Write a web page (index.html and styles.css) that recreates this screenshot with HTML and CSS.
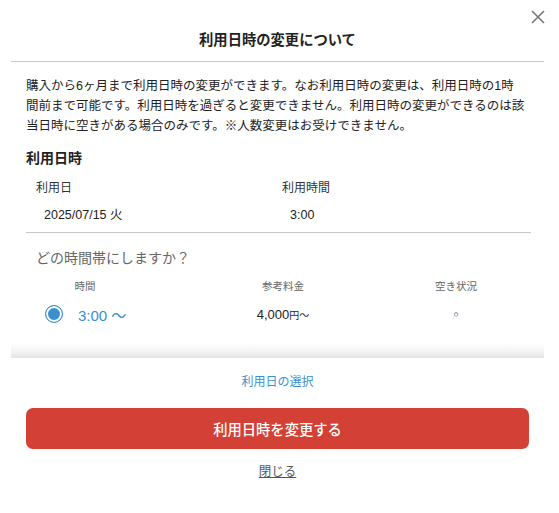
FILE: index.html
```html
<!DOCTYPE html>
<html lang="ja">
<head>
<meta charset="utf-8">
<title>利用日時の変更について</title>
<link rel="stylesheet" href="styles.css">
</head>
<body>
<div class="modal">
  <button class="close" aria-label="閉じる">
    <svg width="14" height="14" viewBox="0 0 14 14"><path d="M1 1L13 13M13 1L1 13" stroke="#777" stroke-width="1.6" fill="none"/></svg>
  </button>
  <header class="modal-header">
    <h1 class="modal-title">利用日時の変更について</h1>
  </header>
  <div class="modal-body">
    <p class="notice">購入から6ヶ月まで利用日時の変更ができます。なお利用日時の変更は、利用日時の1時間前まで可能です。利用日時を過ぎると変更できません。利用日時の変更ができるのは該当日時に空きがある場合のみです。※人数変更はお受けできません。</p>
    <h2 class="section-title">利用日時</h2>
    <div class="datetime">
      <div class="dt-label">利用日</div>
      <div class="dt-label">利用時間</div>
      <div class="dt-value">2025/07/15 火</div>
      <div class="dt-value">3:00</div>
    </div>
    <p class="question">どの時間帯にしますか？</p>
    <div class="slots">
      <div class="slot-head">時間</div>
      <div class="slot-head">参考料金</div>
      <div class="slot-head">空き状況</div>
      <label class="slot-time"><span class="radio"></span><span class="time-text">3:00 〜</span></label>
      <div class="slot-price">4,000<span class="yen">円〜</span></div>
      <div class="slot-avail">○</div>
    </div>
  </div>
  <div class="fade"></div>
  <footer class="modal-footer">
    <a class="date-link">利用日の選択</a>
    <button class="submit">利用日時を変更する</button>
    <a class="close-link">閉じる</a>
  </footer>
</div>
</body>
</html>
```
FILE: styles.css
```css
* { box-sizing: border-box; }
html, body { margin: 0; padding: 0; background: #fff; }
body {
  font-family: "Liberation Sans", "Noto Sans CJK JP", sans-serif;
  color: #222;
}
.modal {
  position: relative;
  width: 559px;
  height: 513px;
  padding: 0 15px 0 11px;
}
.close {
  position: absolute;
  top: 10px;
  right: 14px;
  width: 14px;
  height: 14px;
  padding: 0;
  border: 0;
  background: none;
  display: block;
}
.close svg { display: block; }
.modal-header {
  height: 62px;
  padding-top: 30px;
  border-bottom: 1px solid #c8c8c8;
}
.modal-title {
  margin: 0;
  font-size: 14.3px;
  line-height: 20px;
  font-weight: bold;
  text-align: center;
  color: #222;
}
.modal-body {
  padding: 0 13px 0 15px;
}
.notice {
  margin: 14px 0 0;
  width: 500px;
  font-size: 12.5px;
  line-height: 20px;
  color: #222;
}
.section-title {
  margin: 12px 0 0;
  font-size: 14px;
  line-height: 20px;
  font-weight: bold;
}
.datetime {
  display: grid;
  grid-template-columns: 246px 1fr;
  row-gap: 9px;
  margin-top: 11px;
  padding: 0 0 8px 10px;
  border-bottom: 1px solid #c8c8c8;
}
.dt-label {
  font-size: 12px;
  line-height: 18px;
  color: #333;
}
.dt-value {
  padding-left: 8px;
  font-size: 12.5px;
  line-height: 18px;
  color: #222;
}
.question {
  margin: 15px 0 0 10px;
  font-size: 14px;
  line-height: 20px;
  color: #666;
}
.slots {
  display: grid;
  grid-template-columns: 118px 278px 68px;
  row-gap: 9px;
  margin-top: 10px;
  align-items: center;
}
.slot-head {
  text-align: center;
  font-size: 10.5px;
  line-height: 16px;
  color: #666;
}
.slot-time {
  display: flex;
  align-items: center;
  gap: 15px;
  padding-left: 19px;
  height: 22px;
}
.radio {
  width: 18px;
  height: 18px;
  border-radius: 50%;
  border: 1.5px solid #3b8fd0;
  background: #3b8fd0;
  box-shadow: inset 0 0 0 2px #fff;
  flex: none;
}
.time-text {
  font-size: 15px;
  color: #3b8fd0;
  white-space: nowrap;
}
.slot-price {
  text-align: center;
  font-size: 13px;
  color: #222;
}
.yen { font-size: 10px; }
.slot-avail {
  text-align: center;
  font-size: 8.5px;
  color: #222;
}
.fade {
  height: 15px;
  margin-top: 18px;
  background: linear-gradient(to bottom, #ffffff 0%, #f3f3f3 60%, #e4e4e4 100%);
}
.modal-footer {
  display: flex;
  flex-direction: column;
  align-items: center;
  padding: 15px 0 0 15px;
}
.date-link {
  font-size: 12px;
  line-height: 18px;
  color: #3b8fd0;
  margin-left: -15px;
}
.submit {
  margin-top: 17px;
  width: 503px;
  height: 41px;
  border: 0;
  border-radius: 7px;
  background: #d34035;
  color: #fff;
  font-family: inherit;
  font-size: 14.3px;
  font-weight: 500;
  align-self: flex-start;
}
.close-link {
  margin-top: 14px;
  margin-left: -15px;
  font-size: 12.5px;
  line-height: 18px;
  color: #555;
  text-decoration: underline;
}
```
